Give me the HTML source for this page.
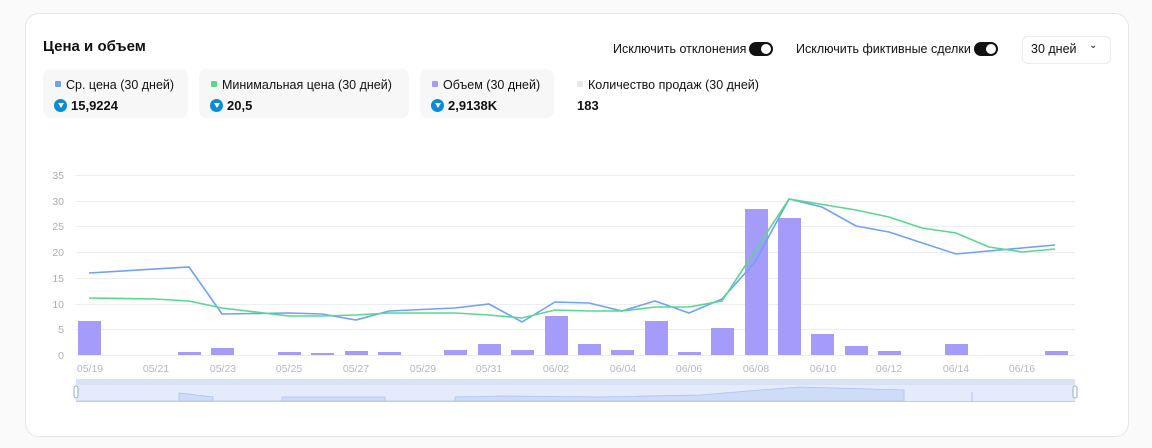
<!DOCTYPE html><html><head><meta charset="utf-8"><style>
body{margin:0;width:1152px;height:448px;background:#fafafa;font-family:"Liberation Sans","DejaVu Sans",sans-serif;position:relative;overflow:hidden;color:#111}
.card{position:absolute;left:25px;top:13px;width:1102px;height:422px;background:#fff;border:1px solid #e6e6e6;border-radius:14px}
.t{position:absolute;left:43px;top:38px;font-size:15px;font-weight:bold}
.st{position:absolute;top:69px;height:49px;background:#f7f7f7;border-radius:8px;font-size:12.5px}
.st .l{position:absolute;left:12px;top:9px;white-space:nowrap}
.st .l i{display:inline-block;width:6px;height:6px;border-radius:1px;margin-right:5px;vertical-align:2px}
.st .v{position:absolute;left:11px;top:29px;font-weight:bold;font-size:13px;white-space:nowrap}
.st .v b{display:inline-block;width:13px;height:13px;border-radius:50%;background:#0a8bd6;vertical-align:-2px;margin-right:4px;position:relative}
.st .v b:after{content:"";position:absolute;left:3.5px;top:4px;border-left:3px solid transparent;border-right:3px solid transparent;border-top:5px solid #fff}
.tg{position:absolute;top:42px;font-size:12.5px;white-space:nowrap}
.sw{display:inline-block;width:24px;height:14px;border-radius:7px;background:#111;vertical-align:-3px;position:relative;margin-left:3px}
.sw:after{content:"";position:absolute;right:2px;top:2px;width:10px;height:10px;border-radius:50%;background:#fff}
.dd{position:absolute;left:1022px;top:36px;width:87px;height:26px;border:1px solid #ececec;border-radius:6px;font-size:12.5px}
</style></head><body>
<div class="card"></div>
<div class="t">Цена и объем</div>
<div class="st" style="left:43px;width:145px"><div class="l"><i style="background:#6fa2f7"></i>Ср. цена (30 дней)</div><div class="v"><b></b>15,9224</div></div>
<div class="st" style="left:199px;width:210px"><div class="l"><i style="background:#5ad88a"></i>Минимальная цена (30 дней)</div><div class="v"><b></b>20,5</div></div>
<div class="st" style="left:420px;width:134px"><div class="l"><i style="background:#a59bfb"></i>Объем (30 дней)</div><div class="v"><b></b>2,9138K</div></div>
<div class="st" style="left:565px;width:210px;background:#fff"><div class="l"><i style="background:#e8e8e8"></i>Количество продаж (30 дней)</div><div class="v" style="left:12px">183</div></div>
<div class="tg" style="left:613px">Исключить отклонения<span class="sw"></span></div>
<div class="tg" style="left:796px">Исключить фиктивные сделки<span class="sw"></span></div>
<div class="dd"><span style="position:absolute;left:8px;top:5px">30 дней</span><span style="position:absolute;left:66px;top:3px;font-size:10px">⌄</span></div>
<svg style="position:absolute;left:0;top:0" width="1152" height="448" font-family="Liberation Sans,sans-serif">
<g stroke="#eceef5" stroke-width="1">
<line x1="76" x2="1075" y1="175.5" y2="175.5"/><line x1="76" x2="1075" y1="201.5" y2="201.5"/><line x1="76" x2="1075" y1="226.5" y2="226.5"/><line x1="76" x2="1075" y1="252.5" y2="252.5"/><line x1="76" x2="1075" y1="278.5" y2="278.5"/><line x1="76" x2="1075" y1="304.5" y2="304.5"/><line x1="76" x2="1075" y1="329.5" y2="329.5"/><line x1="76" x2="1075" y1="355.5" y2="355.5"/>
</g>
<g fill="#a9adb8" font-size="10.5" text-anchor="end">
<text x="64" y="179">35</text><text x="64" y="205">30</text><text x="64" y="230">25</text><text x="64" y="256">20</text><text x="64" y="282">15</text><text x="64" y="308">10</text><text x="64" y="333">5</text><text x="64" y="359">0</text></g>
<g fill="#b4b7c0" font-size="10.5" text-anchor="middle">
<text x="90" y="372">05/19</text><text x="156" y="372">05/21</text><text x="223" y="372">05/23</text><text x="289" y="372">05/25</text><text x="356" y="372">05/27</text><text x="423" y="372">05/29</text><text x="489" y="372">05/31</text><text x="556" y="372">06/02</text><text x="623" y="372">06/04</text><text x="689" y="372">06/06</text><text x="756" y="372">06/08</text><text x="823" y="372">06/10</text><text x="889" y="372">06/12</text><text x="956" y="372">06/14</text><text x="1022" y="372">06/16</text></g>
<g fill="#a59bfb">
<rect x="78" y="321" width="23" height="34"/><rect x="178" y="352" width="23" height="3"/><rect x="211" y="348" width="23" height="7"/><rect x="278" y="352" width="23" height="3"/><rect x="311" y="353" width="23" height="2"/><rect x="345" y="351" width="23" height="4"/><rect x="378" y="352" width="23" height="3"/><rect x="444" y="350" width="23" height="5"/><rect x="478" y="344" width="23" height="11"/><rect x="511" y="350" width="23" height="5"/><rect x="545" y="316" width="23" height="39"/><rect x="578" y="344" width="23" height="11"/><rect x="611" y="350" width="23" height="5"/><rect x="645" y="321" width="23" height="34"/><rect x="678" y="352" width="23" height="3"/><rect x="711" y="328" width="23" height="27"/><rect x="745" y="209" width="23" height="146"/><rect x="778" y="218" width="23" height="137"/><rect x="811" y="334" width="23" height="21"/><rect x="845" y="346" width="23" height="9"/><rect x="878" y="351" width="23" height="4"/><rect x="945" y="344" width="23" height="11"/><rect x="1045" y="351" width="23" height="4"/>
</g>
<polyline fill="none" stroke="#6fa2f7" stroke-width="1.6" points="89,273 189,267 222,314 289,313 322,314 356,320 389,311 455,308 489,304 522,322 555,302 589,303 622,311 655,301 689,313 722,299 755,262 789,199 822,207 856,226 889,232 956,254 1055,245"/>
<polyline fill="none" stroke="#5ad88a" stroke-width="1.6" points="89,298 155,299 189,301 222,308 289,316 322,316 356,315 389,313 455,313 489,315 522,318 555,310 589,311 622,311 655,307 689,307 722,301 789,199 856,210 889,217 922,228 956,233 989,247 1022,252 1055,249"/>
<rect x="76" y="379" width="999" height="23" fill="#e4ecfb"/>
<rect x="76" y="379" width="999" height="6" fill="#d9e2f4"/>
<path d="M76,401 L179,401 L179,393 L213,397 L213,401 L282,401 L282,397 L385,397 L385,401 L455,401 L455,397 L500,396 L600,397 L700,395 L760,390 L800,387 L870,389 L904,390 L904,401 Z" fill="#cfdcf8" stroke="#a9c1f3" stroke-width="0.8"/>
<line x1="972" x2="972" y1="392" y2="402" stroke="#a9c1f3"/>
<line x1="76" x2="1075" y1="401.5" y2="401.5" stroke="#b9ccf3"/>
<rect x="74" y="386" width="4" height="12" rx="2" fill="#fff" stroke="#9aa9c4"/>
<rect x="1073" y="386" width="4" height="12" rx="2" fill="#fff" stroke="#9aa9c4"/>
</svg>
</body></html>
